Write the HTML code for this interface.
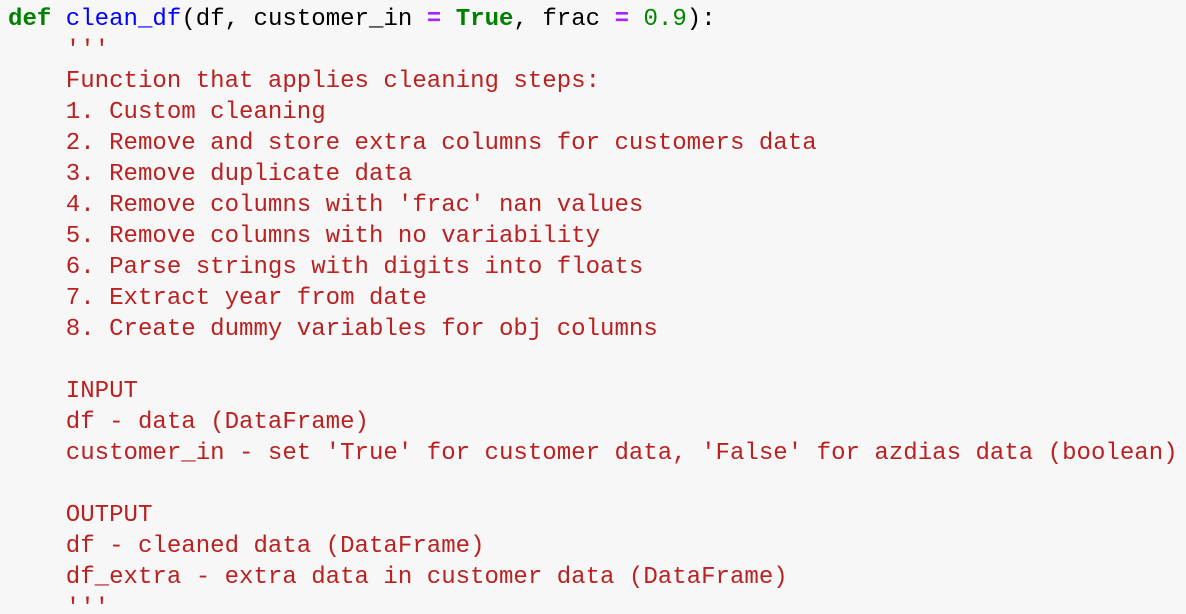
<!DOCTYPE html>
<html><head><style>
html,body{margin:0;padding:0;background:#f7f7f7;width:1186px;height:614px;overflow:hidden}
pre{margin:0;padding:4px 0 0 8px;font-family:"Liberation Mono",monospace;font-size:24.07px;line-height:31px;color:#000}
.k{color:#008000;font-weight:bold}.f{color:#0000ff}.o{color:#aa22ff;font-weight:bold}.n{color:#008800}.s{color:#ba2121}
</style></head><body><pre><span class="k">def</span> <span class="f">clean_df</span>(df, customer_in <span class="o">=</span> <span class="k">True</span>, frac <span class="o">=</span> <span class="n">0.9</span>):
<span class="s">    '''
    Function that applies cleaning steps:
    1. Custom cleaning
    2. Remove and store extra columns for customers data
    3. Remove duplicate data
    4. Remove columns with 'frac' nan values
    5. Remove columns with no variability
    6. Parse strings with digits into floats
    7. Extract year from date
    8. Create dummy variables for obj columns

    INPUT
    df - data (DataFrame)
    customer_in - set 'True' for customer data, 'False' for azdias data (boolean)

    OUTPUT
    df - cleaned data (DataFrame)
    df_extra - extra data in customer data (DataFrame)
    '''</span></pre></body></html>
